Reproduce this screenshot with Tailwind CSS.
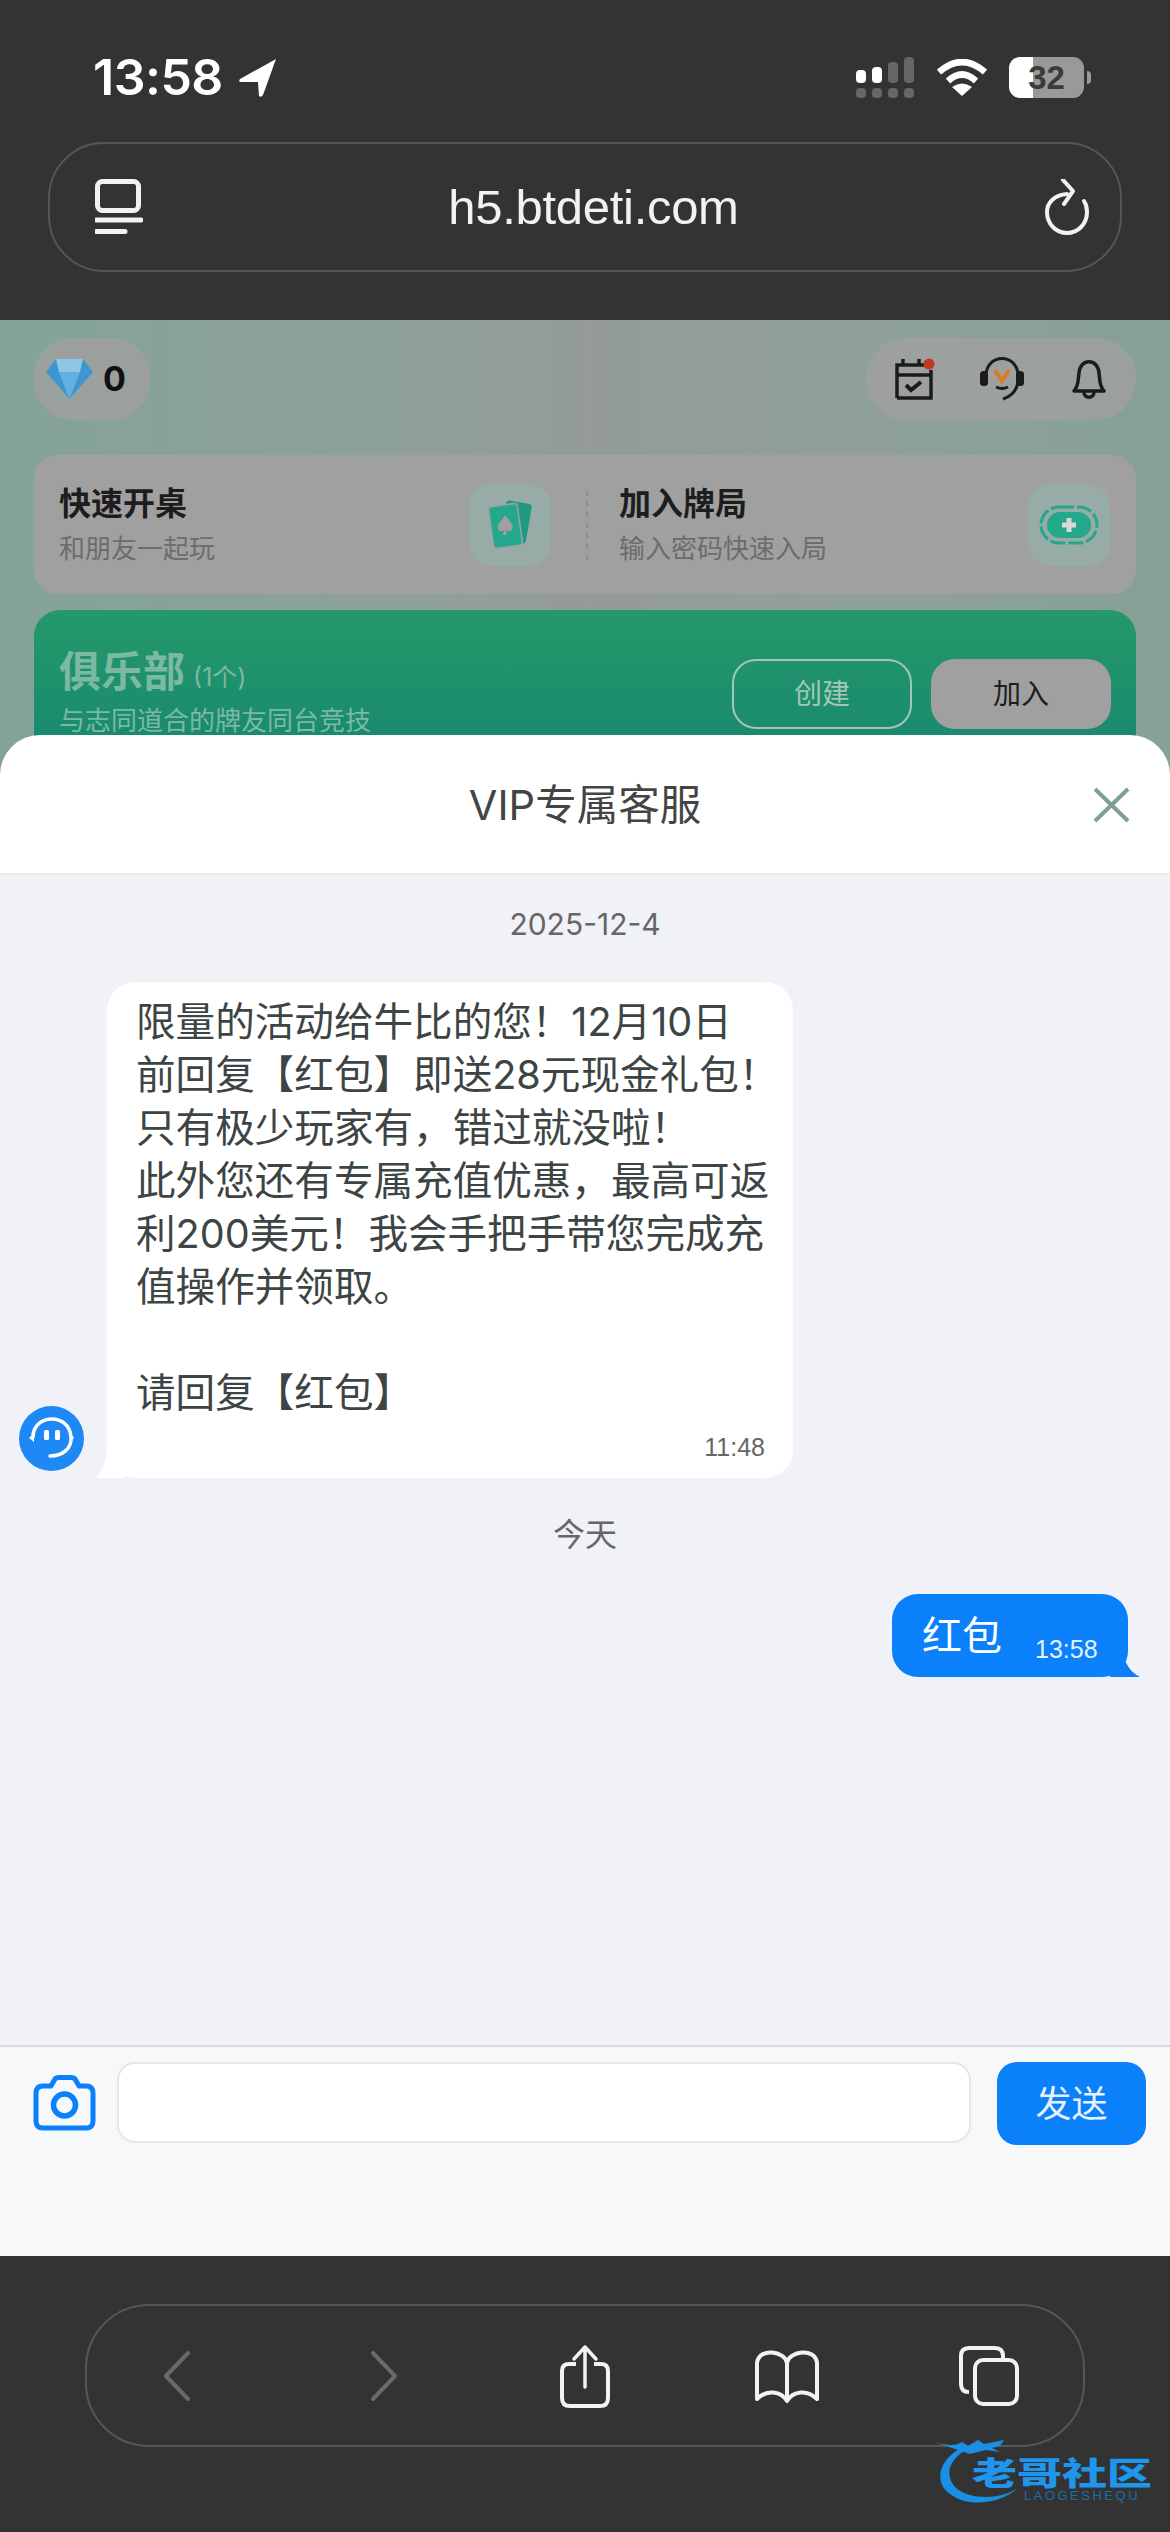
<!DOCTYPE html>
<html lang="zh">

<head>
    <meta charset="UTF-8">
    <meta name="viewport" content="width=device-width, initial-scale=1.0">
    <title>VIP专属客服</title>
    <script src="https://cdn.jsdelivr.net/npm/@tailwindcss/browser@4"></script>
</head>

<body class="bg-[#333333]">
    <div class="relative w-[1170px] h-[2532px] flex flex-col overflow-hidden font-['Inter','Noto_Sans_CJK_SC',sans-serif]">

        <!-- safari top -->
        <div class="h-[320px] shrink-0 bg-[#333333] px-[48px]">
            <div class="h-[142px] flex justify-between pt-[52px]">
                <div class="flex items-start gap-[15px] pl-[45px]">
                    <span class="text-[50px] leading-[50px] font-semibold text-white tracking-[-0.5px]">13:58</span>
                    <svg class="mt-[6px]" width="40" height="40" viewBox="0 0 40 40"><path d="M38 1 L2 21 Q0 24 3 24 L20 24 L21 38 Q23 40 25 37 Z" fill="#fff" /></svg>
                </div>
                <div class="flex items-start pt-[5px] pr-[31px]">
                    <svg width="60" height="42" viewBox="0 0 60 42" class="mr-[21px]">
                        <rect x="0" y="13" width="10" height="13" rx="4" fill="#fff" />
                        <rect x="16" y="10" width="10" height="16" rx="4" fill="#fff" />
                        <rect x="32" y="5" width="10" height="21" rx="4" fill="#666" />
                        <rect x="48" y="0" width="10" height="26" rx="4" fill="#666" />
                        <rect x="0" y="31" width="10" height="10" rx="4" fill="#666" />
                        <rect x="16" y="31" width="10" height="10" rx="4" fill="#666" />
                        <rect x="32" y="31" width="10" height="10" rx="4" fill="#666" />
                        <rect x="48" y="31" width="10" height="10" rx="4" fill="#666" />
                    </svg>
                    <svg width="50" height="38" viewBox="0 0 50 38" class="mt-[2px] mr-[22px]" fill="none" stroke="#fff" stroke-width="6.5">
                        <path d="M2 13 Q25 -7 48 13" />
                        <path d="M11 22 Q25 9 39 22" />
                        <path d="M25 37 L15 28 Q25 21 35 28 Z" fill="#fff" stroke="none" />
                    </svg>
                    <div class="w-[75px] h-[41px] rounded-[11px] bg-[linear-gradient(90deg,#ffffff_32%,#999999_32%)] flex items-center justify-center text-[33px] font-bold text-[#3b3b3b] font-['Liberation_Sans',sans-serif]">32</div>
                    <div class="w-[4px] h-[13px] mt-[14px] ml-[3px] rounded-r-full bg-[#999999]"></div>
                </div>
            </div>
            <div class="h-[130px] rounded-[56px] border-2 border-[#565656] flex items-center justify-between pl-[45px] pr-[30px]">
                <svg width="48" height="56" viewBox="0 0 48 56" fill="none" stroke="#f2f2f2">
                    <rect x="2.5" y="2.5" width="41" height="29" rx="5" stroke-width="5" />
                    <path d="M1 41 H46" stroke-width="5" stroke-linecap="round" />
                    <path d="M1 52.500 H30" stroke-width="5" stroke-linecap="round" />
                </svg>
                <span class="text-[49px] leading-none text-[#f2f2f2] tracking-[-0.3px] font-['Liberation_Sans',sans-serif]">h5.btdeti.com</span>
                <svg width="46" height="56" viewBox="0 0 46 56" fill="none" stroke="#f2f2f2" stroke-width="4" stroke-linecap="round" stroke-linejoin="round">
                    <path d="M23 15 C10 16 3 24 3 33 C3 45 12 54 23 54 C34 54 43 45 43 33 C43 28 42 25 40 22" />
                    <path d="M19 1 L29 12 L20 25" />
                </svg>
            </div>
        </div>

        <!-- dimmed page behind -->
        <div class="h-[455px] shrink-0 px-[34px] pt-[18px] bg-[linear-gradient(90deg,#83a39a_0%,#8fa09b_35%,#949b99_50%,#8fa09b_75%,#86a196_100%)]">
            <div class="flex justify-between">
                <div class="w-[116px] h-[82px] rounded-[38px] bg-[#a0a0a0]/80 flex items-center pl-[12px] gap-[10px]">
                    <svg width="47" height="40" viewBox="0 0 47 40">
                        <path d="M10 0 H37 L47 13 L23.500 40 L0 13 Z" fill="#3d96cf" />
                        <path d="M10 0 H37 L34 13 H13 Z" fill="#8ec7e6" />
                        <path d="M13 13 H34 L23.500 40 Z" fill="#62b0de" />
                    </svg>
                    <span class="text-[34px] leading-none font-bold text-[#111]">0</span>
                </div>
                <div class="w-[270px] h-[82px] rounded-[40px] bg-[#a0a0a0]/80 flex items-center pl-[29px]">
                    <svg width="40" height="42" viewBox="0 0 40 42" fill="none" stroke="#1b1b1b" stroke-width="3.500">
                        <path d="M8 1 V8 M24 1 V8" />
                        <path d="M2 40 V7 H30 M2 17 H36 M36 12 V40 H2" />
                        <path d="M11 27 L16 32 L26 24" stroke-width="4" />
                        <circle cx="34" cy="6" r="5.500" fill="#c4381b" stroke="none" />
                    </svg>
                    <svg class="ml-[44px]" width="46" height="44" viewBox="0 0 46 44" fill="none" stroke="#1b1b1b" stroke-width="3">
                        <path d="M7 18 C8 -4 38 -4 39 18 C40 30 36 38 24 42" />
                        <rect x="1" y="14" width="8" height="15" rx="3.500" fill="#1b1b1b" stroke="none" />
                        <rect x="37" y="14" width="8" height="15" rx="3.500" fill="#1b1b1b" stroke="none" />
                        <path d="M16 13 L23 24 L30 13" stroke="#d97b22" stroke-width="4" />
                        <path d="M17 30 Q23 33 29 30" />
                    </svg>
                    <svg class="ml-[47px]" width="34" height="40" viewBox="0 0 34 40" fill="none" stroke="#1b1b1b" stroke-width="3.500" stroke-linejoin="round">
                        <path d="M2 32 C7 27 6 20 7 14 C8 -1 26 -1 27 14 C28 20 27 27 32 32 Z" />
                        <path d="M12 33 C12 40 22 40 22 33" />
                    </svg>
                </div>
            </div>

            <div class="mt-[35px] h-[139px] rounded-[24px] bg-[#a0a0a0] flex items-center pl-[25px] pr-[28px]">
                <div class="flex-1 flex items-center">
                    <div class="w-[410px]">
                        <div class="text-[32px] leading-[40px] font-bold text-[#1d1d1d]">快速开桌</div>
                        <div class="mt-[8px] text-[26px] leading-[34px] text-[#6c6c6c]">和朋友一起玩</div>
                    </div>
                    <div class="w-[82px] h-[82px] rounded-[22px] bg-[#97aca6] flex items-center justify-center">
                        <svg width="50" height="50" viewBox="0 0 50 50">
                            <rect x="18" y="2" width="26" height="40" rx="3" transform="rotate(10 31 22)" fill="#1f9a81" />
                            <rect x="6" y="5" width="29" height="42" rx="3" transform="rotate(-8 20 26)" fill="#23a88c" stroke="#a0a0a0" stroke-width="1.500" />
                            <path d="M20 15 C24 21 29 24 27 29 C26 32 23 32 21 30 L22 35 H18 L19 30 C17 32 14 32 13 29 C12 24 17 21 20 15 Z" fill="#a0a0a0" />
                        </svg>
                    </div>
                </div>
                <div class="w-0 h-[70px] ml-[35px] border-l-2 border-dashed border-[#8f8f8f]"></div>
                <div class="flex items-center pl-[31px]">
                    <div class="w-[409px]">
                        <div class="text-[32px] leading-[40px] font-bold text-[#1d1d1d]">加入牌局</div>
                        <div class="mt-[8px] text-[26px] leading-[34px] text-[#6c6c6c]">输入密码快速入局</div>
                    </div>
                    <div class="w-[82px] h-[82px] rounded-[22px] bg-[#97aca6] flex items-center justify-center">
                        <svg width="60" height="40" viewBox="0 0 60 40">
                            <rect x="2" y="2" width="56" height="36" rx="18" fill="none" stroke="#23a88c" stroke-width="3" stroke-dasharray="15 3" />
                            <rect x="8" y="7" width="44" height="26" rx="13" fill="#23a88c" />
                            <path d="M30 13 V27 M23 20 H37" stroke="#d8d8d8" stroke-width="5" />
                        </svg>
                    </div>
                </div>
            </div>

            <div class="mt-[16px] h-[170px] rounded-t-[26px] bg-[linear-gradient(180deg,#25996a,#168570)] flex justify-between pl-[25px] pr-[25px] pt-[37px]">
                <div>
                    <div class="flex items-end leading-none">
                        <span class="text-[42px] leading-[50px] font-bold text-[#7bb9a2]">俱乐部</span>
                        <span class="ml-[8px] text-[25px] leading-[40px] text-[#7bb9a2]">(1个)</span>
                    </div>
                    <div class="mt-[7px] text-[26px] leading-[34px] text-[#7bb9a2]">与志同道合的牌友同台竞技</div>
                </div>
                <div class="flex gap-[19px] pt-[12px]">
                    <div class="w-[180px] h-[70px] rounded-[24px] border-2 border-[#a3c6b9] flex items-center justify-center text-[28px] text-[#a3c6b9]">创建</div>
                    <div class="w-[180px] h-[70px] rounded-[24px] bg-[#a0a0a0] flex items-center justify-center text-[28px] text-[#1d1d1d]">加入</div>
                </div>
            </div>
        </div>

        <!-- chat sheet -->
        <div class="relative -mt-[40px] flex-1 flex flex-col rounded-t-[40px] bg-white overflow-hidden">
            <div class="relative h-[140px] shrink-0 flex items-center justify-center border-b-2 border-[#eaecef] pt-[3px]">
                <span class="text-[41.5px] leading-none text-[#444444]">VIP专属客服</span>
                <svg class="absolute right-[40px] top-[52px]" width="37" height="36" viewBox="0 0 37 36" fill="none" stroke="#7d9f98" stroke-width="4">
                    <path d="M2 2 L35 34 M35 2 L2 34" />
                </svg>
            </div>

            <div class="flex-1 bg-[#f0f2f7] px-[19px]">
                <div class="mt-[30px] text-center text-[30px] leading-[38px] text-[#666666]">2025-12-4</div>

                <div class="mt-[39px] flex items-end gap-[23px]">
                    <svg class="mb-[7px]" width="65" height="65" viewBox="0 0 65 65">
                        <circle cx="32.500" cy="32.500" r="32.500" fill="#1e88f7" />
                        <path d="M14 31 C14 8 50 6 52 31 C53 42 44 50 31 50" fill="none" stroke="#fff" stroke-width="3.500" stroke-linecap="round" />
                        <path d="M15 27 L10 32 L15 36 Z M51 27 L55 32 L51 36 Z" fill="#fff" />
                        <rect x="25" y="24" width="5" height="10" rx="1.500" fill="#fff" />
                        <rect x="36" y="24" width="5" height="10" rx="1.500" fill="#fff" />
                    </svg>
                    <div class="relative w-[686px] h-[496px] rounded-[28px] bg-white pl-[29px] pt-[14px]">
                        <svg class="absolute -left-[12px] bottom-0" width="30" height="36" viewBox="0 0 30 36"><path d="M12 0 C12 18 8 30 0 36 L30 36 L30 0 Z" fill="#fff" /></svg>
                        <p class="relative text-[39.6px] leading-[53px] text-[#3d4444] whitespace-nowrap">限量的活动给牛比的您！12月10日<br>前回复【红包】即送28元现金礼包！<br>只有极少玩家有，错过就没啦！<br>此外您还有专属充值优惠，最高可返<br>利200美元！我会手把手带您完成充<br>值操作并领取。<br><br>请回复【红包】</p>
                        <div class="absolute right-[28px] bottom-[16px] text-[25px] leading-[30px] text-[#666666] font-['Liberation_Sans',sans-serif]">11:48</div>
                    </div>
                </div>

                <div class="mt-[38px] text-center text-[32px] leading-[38px] text-[#666666]">今天</div>

                <div class="mt-[40px] flex justify-end pr-[23px]">
                    <div class="relative w-[236px] h-[83px] rounded-[26px] bg-[#0a80fb] flex items-end pl-[30px] pb-[14px]">
                        <svg class="absolute -right-[12px] bottom-0" width="30" height="34" viewBox="0 0 30 34"><path d="M12 0 C12 16 18 28 30 34 L0 34 L0 0 Z" fill="#0a80fb" /></svg>
                        <span class="relative text-[40px] leading-[54px] text-white">红包</span>
                        <span class="relative ml-[33px] text-[25px] leading-[28px] text-[#e6f1ff] font-['Liberation_Sans',sans-serif]">13:58</span>
                    </div>
                </div>
            </div>

            <div class="h-[211px] shrink-0 bg-[#f7f8fa] border-t-2 border-[#d9dbe0] flex items-start pt-[15px] pl-[33px] pr-[24px]">
                <svg class="mt-[13px]" width="63" height="56" viewBox="0 0 63 56" fill="none" stroke="#0a80fb" stroke-width="5">
                    <path d="M10 11 H18 L22 4 Q23 2.500 26 2.500 H38 Q41 2.500 42 4 L46 11 H53 Q60 11 60 18 V46 Q60 53 53 53 H10 Q3 53 3 46 V18 Q3 11 10 11 Z" stroke-linejoin="round" />
                    <circle cx="31.500" cy="30" r="11" stroke-width="5.500" />
                </svg>
                <div class="ml-[21px] w-[854px] h-[81px] rounded-[18px] bg-white border-2 border-[#e6e7ea]"></div>
                <div class="ml-[26px] w-[149px] h-[83px] rounded-[20px] bg-[#0a80fb] flex items-center justify-center text-[36px] text-[#e8f2ff]">发送</div>
            </div>
        </div>

        <!-- safari bottom -->
        <div class="h-[276px] shrink-0 bg-[#333333] pt-[48px] px-[85px]">
            <div class="h-[143px] rounded-[64px] border-2 border-[#565656] grid grid-cols-5 items-center">
                <svg class="justify-self-center -translate-x-[10px]" width="28" height="50" viewBox="0 0 28 50" fill="none" stroke="#696969" stroke-width="4" stroke-linecap="round" stroke-linejoin="round"><path d="M25 2 L3 25 L25 48" /></svg>
                <svg class="justify-self-center -translate-x-[2px]" width="28" height="50" viewBox="0 0 28 50" fill="none" stroke="#696969" stroke-width="4" stroke-linecap="round" stroke-linejoin="round"><path d="M3 2 L25 25 L3 48" /></svg>
                <svg class="justify-self-center" width="50" height="64" viewBox="0 0 50 64" fill="none" stroke="#f2f2f2" stroke-width="3.500" stroke-linejoin="round">
                    <path d="M16 20 H9 Q2 20 2 27 V54 Q2 62 10 62 H40 Q48 62 48 54 V27 Q48 20 41 20 H34" stroke-width="4" />
                    <path d="M25 43 V3 M14 15 L25 3 L36 15" stroke-linecap="round" />
                </svg>
                <svg class="justify-self-center translate-x-[3px]" width="64" height="54" viewBox="0 0 64 54" fill="none" stroke="#f2f2f2" stroke-width="4" stroke-linejoin="round">
                    <path d="M32 14 C30 2 4 -2 2 14 V50 C12 40 26 42 32 52 C38 42 52 40 62 50 V14 C60 -2 34 2 32 14 V52" />
                </svg>
                <svg class="justify-self-center translate-x-[6px]" width="60" height="60" viewBox="0 0 60 60" fill="none" stroke="#f2f2f2" stroke-width="4">
                    <path d="M10 46 Q2 46 2 38 V10 Q2 2 10 2 H36 Q44 2 44 10 V14" />
                    <rect x="16" y="14" width="42" height="44" rx="8" />
                </svg>
            </div>
        </div>

        <!-- watermark -->
        <div class="absolute left-[934px] top-[2438px] w-[225px] h-[70px]">
            <svg class="absolute left-0 top-0" width="225" height="70" viewBox="0 0 225 70">
                <path d="M32 8 C6 18 -2 44 16 56 C34 70 66 66 84 50 C66 62 36 62 22 50 C10 38 14 20 36 10 Z" fill="#1a8fe6" />
                <path d="M0 4 C14 8 22 8 28 4 L34 8 L44 2 L50 6 L70 2 L66 8 L58 10 L66 14 L52 12 L36 16 Z" fill="#1a8fe6" />
            </svg>
            <div class="absolute left-[38px] top-[11px] text-[45px] leading-[50px] font-black text-[#1e96ee] whitespace-nowrap scale-y-70">老哥社区</div>
            <div class="absolute left-[90px] top-[50px] text-[13px] leading-[16px] tracking-[2.500px] text-[#1a6fa8] font-['Liberation_Sans',sans-serif] whitespace-nowrap">LAOGESHEQU</div>
        </div>
    </div>
</body>

</html>
